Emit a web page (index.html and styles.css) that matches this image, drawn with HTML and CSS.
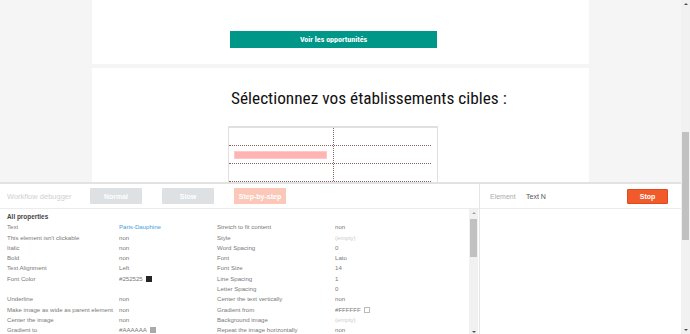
FILE: index.html
```html
<!DOCTYPE html>
<html lang="fr">
<head>
  <meta charset="UTF-8" />
  <meta name="viewport" content="width=device-width, initial-scale=1.0"/>
  <title>Sélection des établissements</title>
  <link rel="stylesheet" href="styles.css">
</head>
<body>
  <div class="screen">
    <div class="viewport">
      <div class="page">
        <section class="card card-top">
          <div class="cta">Voir les opportunités</div>
        </section>
        <section class="card card-select">
          <h1 class="title">Sélectionnez vos établissements cibles :</h1>
          <div class="grid-box">
            <div class="grid-row"><div class="cell cell-left"></div><div class="cell"></div></div>
            <div class="grid-row"><div class="cell cell-left"><span class="pill"></span></div><div class="cell"></div></div>
            <div class="grid-row"><div class="cell cell-left"></div><div class="cell"></div></div>
            <div class="grid-row"><div class="cell cell-left"></div><div class="cell"></div></div>
          </div>
        </section>
      </div>

      <div class="debugger">
        <div class="dbg-main">
          <div class="dbg-head">
            <span class="dbg-title">Workflow debugger</span>
            <button class="dbg-btn">Normal</button>
            <button class="dbg-btn">Slow</button>
            <button class="dbg-btn step">Step-by-step</button>
          </div>
          <div class="dbg-body">
            <div class="props">
              <div class="props-title">All properties</div>
              <div class="props-grid">
                <span>Text</span><span class="link">Paris-Dauphine</span><span>Stretch to fit content</span><span>non</span>
                <span>This element isn't clickable</span><span>non</span><span>Style</span><span class="empty">(empty)</span>
                <span>Italic</span><span>non</span><span>Word Spacing</span><span>0</span>
                <span>Bold</span><span>non</span><span>Font</span><span>Lato</span>
                <span>Text Alignment</span><span>Left</span><span>Font Size</span><span>14</span>
                <span>Font Color</span><span>#252525 <i class="swatch dark"></i></span><span>Line Spacing</span><span>1</span>
                <span></span><span></span><span>Letter Spacing</span><span>0</span>
                <span>Underline</span><span>non</span><span>Center the text vertically</span><span>non</span>
                <span>Make image as wide as parent element</span><span>non</span><span>Gradient from</span><span>#FFFFFF <i class="swatch white"></i></span>
                <span>Center the image</span><span>non</span><span>Background image</span><span class="empty">(empty)</span>
                <span>Gradient to</span><span>#AAAAAA <i class="swatch grey"></i></span><span>Repeat the image horizontally</span><span>non</span>
              </div>
            </div>
            <div class="vscroll">
              <span class="arrow up"></span>
              <span class="thumb"></span>
              <span class="arrow down"></span>
            </div>
          </div>
        </div>
        <div class="dbg-side">
          <div class="dbg-head side-head">
            <span class="el-label">Element</span>
            <span class="el-name">Text N</span>
            <button class="stop-btn">Stop</button>
          </div>
          <div class="inspector"></div>
        </div>
      </div>
    </div>

    <div class="page-scroll">
      <span class="arrow up"></span>
      <span class="thumb"></span>
      <span class="arrow down"></span>
    </div>
  </div>
</body>
</html>
```

FILE: styles.css
```css
* { margin: 0; padding: 0; box-sizing: border-box; }
body {
  font-family: "Liberation Sans", Arial, sans-serif;
  background: #f5f5f5;
  color: #333;
}
.screen { display: flex; height: 334px; width: 690px; overflow: hidden; }
.viewport { flex: 1; display: flex; flex-direction: column; min-width: 0; }

/* page behind the debugger */
.page { height: 182px; flex: none; overflow: hidden; background: #f5f5f5; }
.card { width: 497px; margin: 0 auto; background: #fff; padding-left: 138px; }
.card-top { height: 64px; padding-top: 31px; }
.card-select { margin-top: 4px; height: 200px; padding-top: 20px; }
.cta {
  width: 207px; height: 17px; line-height: 17px;
  background: #009688; color: #fff;
  font-family: Roboto, sans-serif; font-size: 8px; font-weight: 700;
  font-stretch: condensed;
  text-align: center;
}
.title {
  font-family: Roboto, sans-serif; font-weight: 400;
  font-size: 17.3px; line-height: 20px; color: #111;
  font-stretch: condensed;
  margin-left: 1px;
  white-space: nowrap;
}
.grid-box {
  margin-top: 18px; margin-left: -2px;
  width: 210px;
  border: 1px solid #e0e0e0; border-top-width: 2px;
}
.grid-row { display: flex; width: 202px; height: 18px; border-bottom: 1px dotted #8a6464; }
.cell { height: 100%; }
.cell-left { width: 105px; border-right: 1px dotted #8a6464; padding: 5px 0 0 5px; }
.pill { display: block; width: 93px; height: 8px; background: #ffb3b3; border: 1px solid #ffc8c8; }

/* workflow debugger */
.debugger {
  flex: 1; display: flex;
  background: #fff;
  border-top: 2px solid #e2e2e2;
  color: #7a7a7a;
}
.dbg-main { width: 480px; border-right: 1px solid #e6e6e6; display: flex; flex-direction: column; }
.dbg-side { flex: 1; display: flex; flex-direction: column; }
.dbg-head {
  height: 25px; flex: none; display: flex; align-items: center;
  border-bottom: 1px solid #ececec;
  padding-left: 7px;
}
.dbg-title { font-size: 7.5px; color: #cfcfcf; width: 83px; }
.dbg-btn {
  width: 52px; height: 16px; margin-right: 20px;
  border: none; border-radius: 1px;
  background: #dde1e3; color: #fff;
  font-family: inherit; font-size: 7px; font-weight: 700;
}
.dbg-btn.step { background: #fbc7b9; }
.side-head { padding-left: 10px; }
.el-label { font-size: 7px; color: #adadad; width: 36px; }
.el-name { font-size: 7px; color: #555; }
.stop-btn {
  margin-left: auto; margin-right: 13px;
  width: 41px; height: 15px;
  border: 1px solid #e0481f; border-radius: 1px;
  background: #f15a2b; color: #fff;
  font-family: inherit; font-size: 7px; font-weight: 700;
}
.dbg-body { flex: 1; display: flex; min-height: 0; }
.props { flex: 1; padding: 3px 0 0 7px; font-size: 6.1px; line-height: 10.3px; }
.props-title { color: #444; font-weight: 700; font-size: 6.4px; }
.props-grid { display: grid; grid-template-columns: 112px 98px 118px auto; white-space: nowrap; }
.props-grid .link { color: #48a1dc; }
.props-grid .empty { color: #cdcdcd; }
.swatch { display: inline-block; width: 6px; height: 6px; vertical-align: -1px; margin-left: 2px; }
.swatch.dark { background: #252525; }
.swatch.grey { background: #aaa; }
.swatch.white { background: #fff; border: 1px solid #bbb; }
.inspector { flex: 1; }

/* scrollbars */
.vscroll, .page-scroll {
  width: 9px; background: #f1f1f1;
  display: flex; flex-direction: column; align-items: center;
}
.vscroll { margin-right: 1px; }
.arrow { width: 0; height: 0; border-left: 2px solid transparent; border-right: 2px solid transparent; margin: 3px 0; }
.arrow.up { border-bottom: 2px solid #a3a3a3; }
.arrow.down { border-top: 2px solid #505050; margin-top: auto; }
.thumb { width: 7px; background: #c1c1c1; }
.vscroll .thumb { height: 38px; margin-top: 2px; }
.page-scroll .arrow.up { border-bottom-color: #505050; }
.page-scroll .thumb { height: 108px; margin-top: 124px; }
```
